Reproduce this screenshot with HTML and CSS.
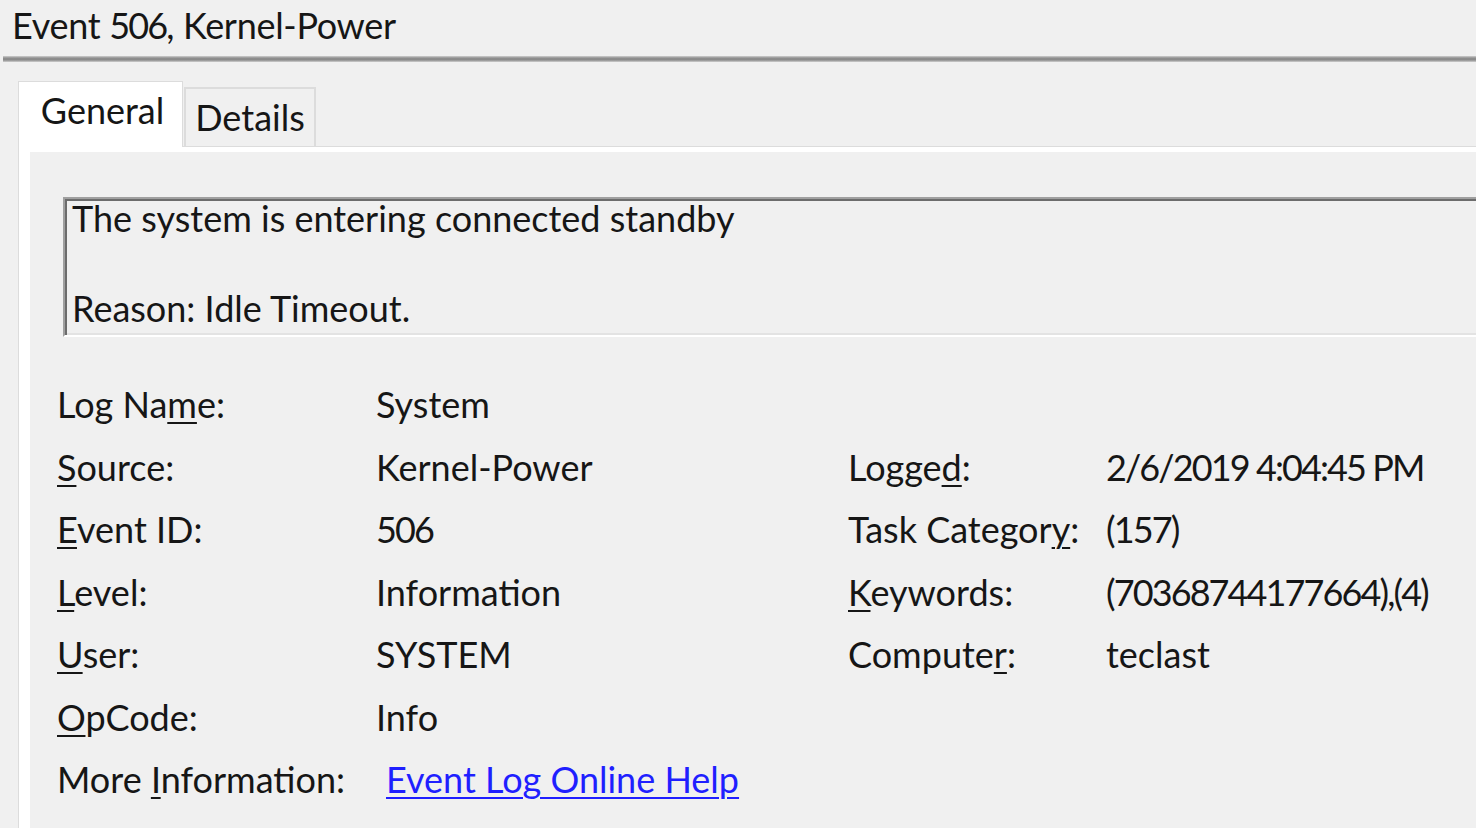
FILE: index.html
```html
<!DOCTYPE html>
<html>
<head>
<meta charset="utf-8">
<link rel="stylesheet" href="styles.css">
</head>
<body>
<div class="window">
  <div class="title">Event <span class="num">506</span>, Kernel-Power</div>
  <div class="separator"></div>
  <div class="tabs">
    <div class="tab tab-active">General</div>
    <div class="tab">Details</div>
  </div>
  <div class="panel">
    <div class="panel-inner">
      <div class="desc">
        <div class="desc-line">The system is entering connected standby</div>
        <div class="desc-line desc-line-gap">Reason: Idle Timeout.</div>
      </div>
      <div class="fields">
        <div class="lbl">Log Na<u>m</u>e:</div><div class="val">System</div><div></div><div></div>
        <div class="lbl"><u>S</u>ource:</div><div class="val">Kernel-Power</div><div class="lbl">Logge<u>d</u>:</div><div class="val num">2/6/2019 4:04:45 PM</div>
        <div class="lbl"><u>E</u>vent ID:</div><div class="val num">506</div><div class="lbl">Task Categor<u>y</u>:</div><div class="val num">(157)</div>
        <div class="lbl"><u>L</u>evel:</div><div class="val">Information</div><div class="lbl"><u>K</u>eywords:</div><div class="val num">(70368744177664),(4)</div>
        <div class="lbl"><u>U</u>ser:</div><div class="val">SYSTEM</div><div class="lbl">Compute<u>r</u>:</div><div class="val">teclast</div>
        <div class="lbl"><u>O</u>pCode:</div><div class="val">Info</div><div></div><div></div>
        <div class="lbl">More <u>I</u>nformation:</div><div class="val"><a class="link" href="#">Event Log Online Help</a></div><div></div><div></div>
      </div>
    </div>
  </div>
</div>
</body>
</html>
```
FILE: styles.css
```css
html, body {
  margin: 0;
  padding: 0;
}
body {
  width: 1476px;
  height: 828px;
  overflow: hidden;
  background: #f0f0f0;
  font-family: "Lato", "Liberation Sans", sans-serif;
  font-size: 36px;
  color: #161616;
}
.window {
  display: flex;
  flex-direction: column;
  height: 828px;
}
.title {
  height: 56px;
  line-height: 51px;
  padding-left: 12px;
  white-space: nowrap;
  letter-spacing: -0.3px;
}
.num {
  letter-spacing: -1.9px;
}
.separator {
  height: 6px;
  margin-left: 3px;
  background: linear-gradient(#cfcfcf, #8e8e8e 35%, #8a8a8a 65%, #cfcfcf);
}
.tabs {
  display: flex;
  align-items: flex-end;
  padding-top: 19px;
  padding-left: 18px;
}
.tab {
  box-sizing: border-box;
  height: 59px;
  width: 132px;
  line-height: 57px;
  text-align: center;
  background: #f0f0f0;
  border: 2px solid #dcdcdc;
  border-bottom: none;
  margin-left: 1px;
}
.tab-active {
  position: relative;
  z-index: 1;
  width: 165px;
  height: 66px;
  margin-bottom: -1px;
  margin-left: 0;
  background: #fff;
  border: 1px solid #dcdcdc;
  border-bottom: none;
  padding-left: 4px;
}
.panel {
  flex: 1;
  margin-left: 18px;
  margin-right: -100px;
  border-top: 1px solid #dcdcdc;
  border-left: 1px solid #dcdcdc;
  background: #fff;
  padding: 5px 0 0 11px;
  display: flex;
}
.panel-inner {
  flex: 1;
  background: #f0f0f0;
  padding-top: 45px;
}
.desc {
  box-sizing: border-box;
  height: 140px;
  margin-left: 33px;
  border-style: solid;
  border-width: 2px;
  border-color: #a0a0a0 #ffffff #ffffff #a0a0a0;
  box-shadow: inset 2px 2px 0 #6c6c6c, inset -2px -2px 0 #e3e3e3;
  padding: 4px 0 0 7px;
  display: flex;
  flex-direction: column;
  white-space: nowrap;
}
.desc-line {
  line-height: 30px;
}
.desc-line-gap {
  margin-top: 60px;
}
.fields {
  display: grid;
  grid-template-columns: 319px 472px 258px auto;
  grid-auto-rows: 62.5px;
  margin-top: 36px;
  padding-left: 27px;
  line-height: 62.5px;
  white-space: nowrap;
}
.fields u {
  text-decoration-thickness: 2px;
  text-underline-offset: 4px;
}
.link {
  margin-left: 10px;
  color: #1f1fff;
  text-decoration: underline;
  text-decoration-thickness: 2px;
  text-underline-offset: 4px;
}
```
